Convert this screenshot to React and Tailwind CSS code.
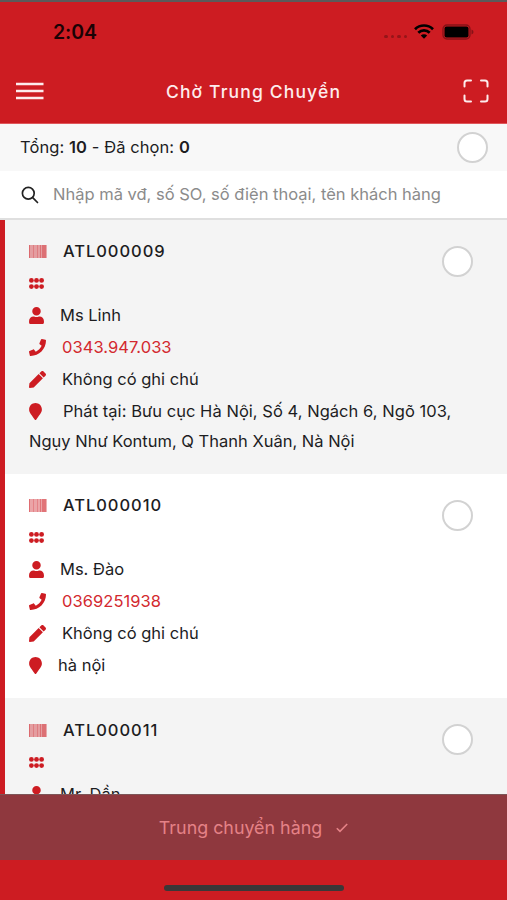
import React from 'react';
import { FaUser, FaPhone, FaPen, FaMapMarker } from 'react-icons/fa';

const orders = [
  {
    code: 'ATL000009',
    name: 'Ms Linh',
    phone: '0343.947.033',
    note: 'Không có ghi chú',
    address: ['Phát tại: Bưu cục Hà Nội, Số 4, Ngách 6, Ngõ 103,', 'Ngụy Như Kontum, Q Thanh Xuân, Nà Nội'],
    className: 'bg-[#f4f4f4] pt-[15px] pb-[17px]',
  },
  {
    code: 'ATL000010',
    name: 'Ms. Đào',
    phone: '0369251938',
    note: 'Không có ghi chú',
    address: ['hà nội'],
    className: 'bg-white pt-[15px] pb-[17px]',
  },
  {
    code: 'ATL000011',
    name: 'Mr. Dần',
    phone: '',
    note: '',
    address: [''],
    className: 'bg-[#f4f4f4] pt-4 pb-4',
  },
];

const Radio = ({ className = '' }) => (
  <span className={`block h-[31px] w-[31px] shrink-0 rounded-full border-2 border-[#d2d2d2] bg-white ${className}`} />
);

const Barcode = () => (
  <svg viewBox="0 0 18 13" className="h-[13px] w-[18px]" fill="#cd1c22">
    <rect width="17.5" height="13" opacity=".4" />
    <path d="M0 0h1v13H0zM4 0h.6v13H4zM8 0h.6v13H8z" opacity=".4" />
    <path d="M11 0h1v13h-1zM13 0h4.500v13H13z" opacity=".35" />
  </svg>
);

const Dots = () => (
  <svg viewBox="0 0 15 11" className="h-[11px] w-[15px]" fill="currentColor">
    {[2.4, 7.5, 12.6].map((x) => (
      <React.Fragment key={x}>
        <circle cx={x} cy="2.4" r="2.4" />
        <circle cx={x} cy="8.6" r="2.4" />
      </React.Fragment>
    ))}
  </svg>
);

const Row = ({ icon, className, children }) => (
  <div className="flex h-8 items-center whitespace-nowrap">
    <span className="flex w-[18px] shrink-0 text-[#cd1c22]">{icon}</span>
    <span className={className}>{children}</span>
  </div>
);

const StatusBar = () => (
  <div className="flex h-[58px] items-center justify-between pt-px pr-[32px] pl-[53px] text-black">
    <span className="pt-0.5 text-[19.5px] font-semibold tracking-[-0.1px] text-[#1b0205]">2:04</span>
    <div className="flex items-center">
      <div className="mt-[10px] mr-[7px] flex gap-[3px]">
        {[0, 1, 2, 3].map((dot) => (
          <i key={dot} className="h-[3.5px] w-[3.5px] rounded-full bg-[#951519]" />
        ))}
      </div>
      <svg viewBox="0 0 20 15" className="h-[15px] w-5" fill="none" stroke="currentColor" strokeWidth="2.7">
        <path d="M1 5.2a12.8 12.8 0 0 1 18 0" />
        <path d="M4.3 8.7a8.1 8.1 0 0 1 11.4 0" />
        <path d="M10 14.8 6.8 11.6a4.5 4.5 0 0 1 6.4 0Z" fill="currentColor" stroke="none" />
      </svg>
      <svg viewBox="0 0 33 16" className="ml-2 h-4 w-[33px]">
        <rect x="1" y="1" width="27" height="14" rx="4" fill="none" stroke="#861217" strokeWidth="1.3" />
        <rect x="2.5" y="2.5" width="24" height="11" rx="2" />
        <path d="M29.5 5.5v5q2-.8 2-2.5t-2-2.5Z" fill="#861217" />
      </svg>
    </div>
  </div>
);

const Header = () => (
  <div className="flex h-[62px] items-center justify-between pr-[18px] pl-4 text-white">
    <svg viewBox="0 0 28 18" className="h-[18px] w-7" stroke="#fdeced" strokeWidth="2.4">
      <path d="M0 2h27.5M0 9h27.5M0 16h27.5" />
    </svg>
    <h1 className="pt-0.5 text-[17.5px] font-medium tracking-[1.15px] text-[#fdeced]">Chờ Trung Chuyển</h1>
    <svg viewBox="0 0 26 24" className="h-6 w-[26px]" fill="none" stroke="#fdeced" strokeWidth="2" strokeLinecap="round">
      <path d="M1.5 7.5V4q0-2.5 2.5-2.5h4M18 1.5h4q2.5 0 2.5 2.5v3.5M24.5 16.5V20q0 2.5-2.5 2.5h-4M8 22.5H4q-2.5 0-2.5-2.5v-3.5" />
    </svg>
  </div>
);

const Order = ({ order }) => (
  <div className={`relative pl-6 ${order.className}`}>
    <Row icon={<Barcode />} className="ml-4 font-[550] tracking-[0.95px]">
      {order.code}
    </Row>
    <Row icon={<Dots />} />
    <Row icon={<FaUser className="h-[17px] w-[15px]" />} className="ml-[13px]">
      {order.name}
    </Row>
    <Row icon={<FaPhone className="h-[17px] w-[17px]" />} className="ml-[15px] tracking-[0.05px] text-[#d3292f]">
      {order.phone}
    </Row>
    <Row icon={<FaPen className="h-[17px] w-[17px]" />} className="ml-[15px]">
      {order.note}
    </Row>
    <Row
      icon={<FaMapMarker className="h-[17px] w-[13px]" />}
      className={order.address.length > 1 ? 'ml-4 tracking-[0.04px]' : 'ml-[11px]'}
    >
      {order.address[0]}
    </Row>
    {order.address[1] && <p className="h-[30px] leading-[28px]">{order.address[1]}</p>}
    <Radio className="absolute top-[25.5px] right-[34px]" />
  </div>
);

export default function App() {
  return (
    <div className="flex h-[900px] w-[507px] flex-col overflow-hidden bg-[#cd1c22] font-['Inter',sans-serif] text-[16.5px] text-[#1d1d1f]">
      <div className="h-[124px] shrink-0 border-t-2 border-b border-t-[#5c5a5a] border-b-[#e0575b]">
        <StatusBar />
        <Header />
      </div>

      <div className="flex h-[47px] shrink-0 items-center justify-between bg-[#f8f8f8] pr-[19px] pl-5">
        <span className="tracking-[0.08px]">
          Tổng: <b className="font-semibold">10</b> - Đã chọn: <b className="font-semibold">0</b>
        </span>
        <Radio />
      </div>

      <div className="flex h-[49px] shrink-0 items-center border-b-2 border-[#dfdfdf] bg-white pl-[21px] text-[#8b8b8b]">
        <svg viewBox="0 0 18 18" className="h-[18px] w-[18px]" fill="none" stroke="#222" strokeWidth="1.7" strokeLinecap="round">
          <circle cx="7.3" cy="7.3" r="5.9" />
          <path d="m11.7 11.7 4.8 4.8" />
        </svg>
        <span className="ml-[14px] whitespace-nowrap">Nhập mã vđ, số SO, số điện thoại, tên khách hàng</span>
      </div>

      <div className="h-[574px] shrink-0 overflow-hidden border-l-[5px] border-[#cd1c22]">
        {orders.map((order) => (
          <Order key={order.code} order={order} />
        ))}
      </div>

      <div className="flex h-[66px] shrink-0 items-center justify-center border-t border-[#7d5557] bg-[#8f383e] pt-0.5 text-[17.85px] text-[#e58287]">
        <span>Trung chuyển hàng</span>
        <svg viewBox="0 0 12 10" className="mb-0.5 ml-[14px] h-[10px] w-3" fill="none" stroke="currentColor" strokeWidth="1.6">
          <path d="m.8 5.2 3.2 3.2 7.2-7.4" />
        </svg>
      </div>

      <div className="flex h-10 shrink-0 justify-center">
        <div className="mt-[25px] h-[5.5px] w-[180px] rounded-full bg-[#3b3738]" />
      </div>
    </div>
  );
}
